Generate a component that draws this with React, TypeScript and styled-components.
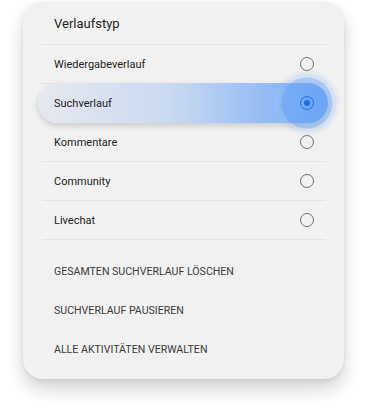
import React, { useState } from 'react';
import styled, { createGlobalStyle } from 'styled-components';

const GlobalStyle = createGlobalStyle`
    html, body {
        margin: 0;
        padding: 0;
        background: #ffffff;
    }
    body {
        font-family: Roboto, "Liberation Sans", Arial, sans-serif;
        -webkit-font-smoothing: antialiased;
    }
`;

const Page = styled.div`
    width: 371px;
    height: 404px;
    padding: 2px 0 0 23px;
    box-sizing: border-box;
`;

const Card = styled.div`
    width: 321px;
    height: 377px;
    box-sizing: border-box;
    padding: 0 18px 0 19px;
    background: #f1f1f1;
    border-radius: 20px;
    box-shadow: 0 10px 18px rgba(0, 0, 0, 0.18), 0 1px 4px rgba(0, 0, 0, 0.08);
    display: flex;
    flex-direction: column;
`;

const Title = styled.div`
    height: 43px;
    box-sizing: border-box;
    display: flex;
    align-items: center;
    padding: 1px 0 0 12px;
    font-size: 13px;
    color: #222;
    border-bottom: 1px solid #e3e3e3;
`;

const List = styled.div`
    display: flex;
    flex-direction: column;
`;

const Row = styled.label<{ $selected: boolean }>`
    position: relative;
    height: 39px;
    box-sizing: border-box;
    display: flex;
    align-items: center;
    justify-content: space-between;
    padding: 0 12px;
    font-size: 11px;
    color: #222;
    border-bottom: 1px solid ${(p) => (p.$selected ? 'transparent' : '#e3e3e3')};
    cursor: pointer;
    ${(p) =>
        p.$selected &&
        `
        margin: -1px -2px 0 -4px;
        height: 40px;
        padding: 0 14px 0 16px;
        border-radius: 20px;
        border-bottom: none;
        background: linear-gradient(90deg, #e6e8ee 0%, #cbdaf1 45%, #6ea8f6 100%);
        box-shadow: 0 3px 6px rgba(0, 0, 0, 0.16);
        z-index: 1;
    `}
`;

const RadioWrap = styled.span`
    position: relative;
    width: 14px;
    height: 14px;
    display: flex;
    align-items: center;
    justify-content: center;
`;

const Halo = styled.span`
    position: absolute;
    left: 50%;
    top: 50%;
    width: 66px;
    height: 66px;
    margin: -33px 0 0 -33px;
    border-radius: 50%;
    background: radial-gradient(circle, rgba(104, 162, 246, 0.5) 0 25px, rgba(150, 188, 240, 0.28) 26px 29px, rgba(175, 203, 240, 0.16) 30px 33px);
    pointer-events: none;
`;

const Radio = styled.span<{ $checked: boolean }>`
    position: relative;
    width: 14px;
    height: 14px;
    box-sizing: border-box;
    border-radius: 50%;
    border: 1.3px solid ${(p) => (p.$checked ? '#1a6fe6' : '#6e6e6e')};
    display: flex;
    align-items: center;
    justify-content: center;

    &::after {
        content: '';
        width: 6px;
        height: 6px;
        border-radius: 50%;
        background: #1a6fe6;
        display: ${(p) => (p.$checked ? 'block' : 'none')};
    }
`;

const Actions = styled.div`
    display: flex;
    flex-direction: column;
    padding-top: 12px;
`;

const Action = styled.button`
    height: 39px;
    padding: 0 12px;
    border: none;
    background: transparent;
    text-align: left;
    font-family: inherit;
    font-size: 10.6px;
    font-weight: 400;
    text-transform: uppercase;
    color: #3a3a3a;
    cursor: pointer;
`;

const options = ['Wiedergabeverlauf', 'Suchverlauf', 'Kommentare', 'Community', 'Livechat'];
const actions = ['Gesamten Suchverlauf löschen', 'Suchverlauf pausieren', 'Alle Aktivitäten verwalten'];

const App: React.FC = () => {
    const [selected, setSelected] = useState('Suchverlauf');

    return (
        <Page>
            <GlobalStyle />
            <Card>
                <Title>Verlaufstyp</Title>
                <List>
                    {options.map((opt) => {
                        const isSel = opt === selected;
                        return (
                            <Row key={opt} $selected={isSel} onClick={() => setSelected(opt)}>
                                <span>{opt}</span>
                                <RadioWrap>
                                    {isSel && <Halo />}
                                    <Radio $checked={isSel} />
                                </RadioWrap>
                            </Row>
                        );
                    })}
                </List>
                <Actions>
                    {actions.map((a) => (
                        <Action key={a}>{a}</Action>
                    ))}
                </Actions>
            </Card>
        </Page>
    );
};

export default App;
